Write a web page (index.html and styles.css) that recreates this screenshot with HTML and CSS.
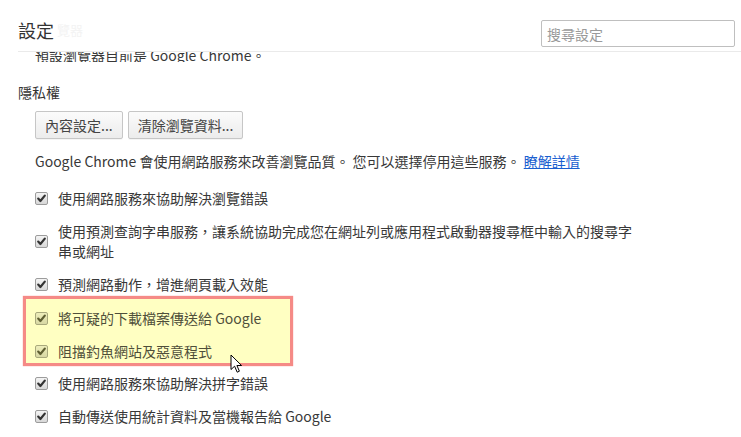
FILE: index.html
```html
<!DOCTYPE html>
<html lang="zh-Hant-TW">
<head>
<meta charset="utf-8">
<title>設定</title>
<link rel="stylesheet" href="styles.css">
</head>
<body>
<header class="top">
  <h1 class="title">設定<span class="ghost">覽器</span></h1>
  <input class="search" type="text" placeholder="搜尋設定">
</header>
<main class="content">
  <div class="clip"><div class="clip-line">預設瀏覽器目前是 Google Chrome。</div></div>
  <h2 class="section">隱私權</h2>
  <div class="sub">
    <div class="buttons">
      <button class="btn">內容設定...</button>
      <button class="btn">清除瀏覽資料...</button>
    </div>
    <p class="note">Google Chrome 會使用網路服務來改善瀏覽品質。 您可以選擇停用這些服務。 <a class="link" href="#">瞭解詳情</a></p>
    <div class="opts">
      <div class="opt"><span class="cb"><svg viewBox="0 0 11 11" width="11" height="11"><path d="M2.2 5.6 L4.4 8 L8.8 2.6" /></svg></span><span class="lbl">使用網路服務來協助解決瀏覽錯誤</span></div>
      <div class="opt"><span class="cb"><svg viewBox="0 0 11 11" width="11" height="11"><path d="M2.2 5.6 L4.4 8 L8.8 2.6" /></svg></span><span class="lbl">使用預測查詢字串服務，讓系統協助完成您在網址列或應用程式啟動器搜尋框中輸入的搜尋字串或網址</span></div>
      <div class="opt"><span class="cb"><svg viewBox="0 0 11 11" width="11" height="11"><path d="M2.2 5.6 L4.4 8 L8.8 2.6" /></svg></span><span class="lbl">預測網路動作，增進網頁載入效能</span></div>
      <div class="hl">
        <div class="opt"><span class="cb"><svg viewBox="0 0 11 11" width="11" height="11"><path d="M2.2 5.6 L4.4 8 L8.8 2.6" /></svg></span><span class="lbl">將可疑的下載檔案傳送給 Google</span></div>
        <div class="opt"><span class="cb"><svg viewBox="0 0 11 11" width="11" height="11"><path d="M2.2 5.6 L4.4 8 L8.8 2.6" /></svg></span><span class="lbl">阻擋釣魚網站及惡意程式</span></div>
      </div>
      <div class="opt"><span class="cb"><svg viewBox="0 0 11 11" width="11" height="11"><path d="M2.2 5.6 L4.4 8 L8.8 2.6" /></svg></span><span class="lbl">使用網路服務來協助解決拼字錯誤</span></div>
      <div class="opt"><span class="cb"><svg viewBox="0 0 11 11" width="11" height="11"><path d="M2.2 5.6 L4.4 8 L8.8 2.6" /></svg></span><span class="lbl">自動傳送使用統計資料及當機報告給 Google</span></div>
    </div>
  </div>
</main>
<svg class="cursor" viewBox="0 0 14 20" width="14" height="20"><path d="M1 1 L1 15.5 L4.6 12.2 L7.2 18.2 L9.4 17.2 L6.9 11.5 L11.6 11.5 Z" /></svg>
</body>
</html>
```

FILE: styles.css
```css
html, body {
  margin: 0;
  background: #fff;
}
body {
  font-family: "Noto Sans CJK TC", "Open Sans", sans-serif;
  font-size: 14px;
  color: #383838;
  overflow: hidden;
}
.top {
  display: flex;
  justify-content: space-between;
  align-items: flex-start;
  height: 51px;
  margin-left: 18px;
  border-bottom: 1px solid #eaeaea;
}
.title {
  margin: 21px 0 0;
  font-size: 18px;
  font-weight: normal;
  line-height: 18px;
  color: #333;
}
.ghost {
  font-size: 13px;
  color: #f3f3f3;
  margin-left: 3px;
  vertical-align: top;
}
.search {
  margin: 20px 6px 0 0;
  width: 194px;
  height: 27px;
  box-sizing: border-box;
  border: 1px solid #bfbfbf;
  border-radius: 2px;
  padding: 0 5px;
  font: inherit;
  font-size: 14px;
  outline: none;
}
.search::placeholder {
  color: #9a9a9a;
}
.content {
  margin-left: 18px;
}
.clip {
  height: 10px;
  overflow: hidden;
  padding-left: 17px;
}
.clip-line {
  line-height: 20px;
  margin-top: -7px;
}
.section {
  margin: 20px 0 0;
  font-size: 14px;
  font-weight: normal;
  line-height: 20px;
  color: #333;
}
.sub {
  padding-left: 17px;
}
.buttons {
  display: flex;
  gap: 5px;
  margin-top: 9px;
}
.btn {
  height: 28px;
  padding: 0 9px;
  border: 1px solid #c6c6c6;
  border-radius: 2px;
  background: linear-gradient(#fbfbfb, #ececec);
  font: inherit;
  color: #444;
  box-shadow: 0 1px 0 rgba(0, 0, 0, 0.04);
}
.note {
  margin: 12px 0 0;
  line-height: 20px;
}
.link {
  color: #1a5fd0;
  text-decoration: underline;
}
.opts {
  margin-top: 17px;
  display: flex;
  flex-direction: column;
  gap: 13px;
}
.opt {
  display: flex;
  align-items: center;
  gap: 10px;
  line-height: 20px;
}
.lbl {
  max-width: 580px;
}
.cb {
  width: 13px;
  height: 13px;
  flex: none;
  box-sizing: border-box;
  border: 1px solid #9c9c9c;
  border-radius: 2px;
  background: linear-gradient(#f4f4f4, #d8d8d8);
  display: flex;
  align-items: center;
  justify-content: center;
}
.cb svg path {
  fill: none;
  stroke: #333;
  stroke-width: 2.2;
  stroke-linecap: round;
  stroke-linejoin: round;
}
.hl {
  margin: -11px 0 -6px -12px;
  width: 270px;
  box-sizing: border-box;
  border: 3px solid #f58a86;
  padding: 9px 9px 2px;
  background: #ffffc2;
  display: flex;
  flex-direction: column;
  gap: 13px;
  box-shadow: 0 0 1px #f58a86;
}
.hl .opt {
  color: #4f4f3a;
}
.hl .cb {
  border-color: #a9a97c;
  background: linear-gradient(#eeeeba, #d8d8a4);
}
.hl .cb svg path {
  stroke: #5f5f32;
}
.cursor {
  position: absolute;
  left: 230px;
  top: 354px;
}
.cursor path {
  fill: #fff;
  stroke: #000;
  stroke-width: 1;
  stroke-linejoin: miter;
}
```
